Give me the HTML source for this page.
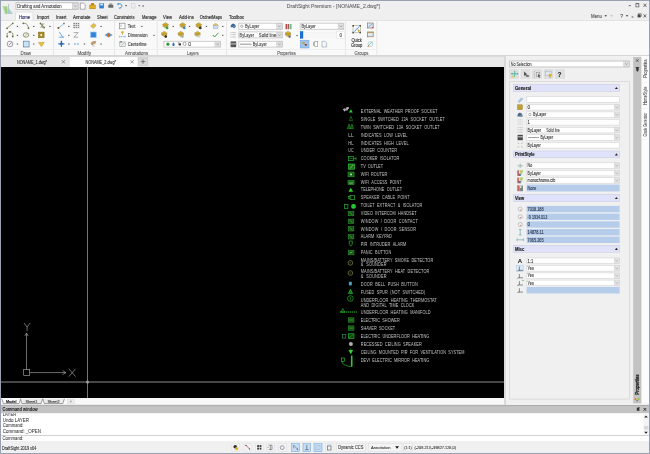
<!DOCTYPE html>
<html><head><meta charset="utf-8">
<style>
*{margin:0;padding:0;box-sizing:border-box}
html,body{width:650px;height:454px;overflow:hidden;background:#f0f0f0;font-family:"Liberation Sans",sans-serif;position:relative}
.a{position:absolute}
.t{position:absolute;white-space:nowrap;line-height:1;color:#333}
svg{position:absolute;left:0;top:0;overflow:visible;will-change:transform}
</style></head><body>
<div class="a" style="left:0px;top:0px;width:650px;height:20px;background:#efefef"></div>
<div class="a" style="left:0px;top:20px;width:650px;height:36px;background:#f9f9f9;border-top:1px solid #e2e2e2;border-bottom:1px solid #d6d6d6"></div>
<div class="a" style="left:0px;top:56px;width:505px;height:11px;background:#e9e9e9;border-top:1px solid #dadada"></div>
<div class="a" style="left:1px;top:67px;width:503px;height:331px;background:#000"></div>
<svg width="650" height="454" style="left:0;top:0">
<line x1="1" y1="382" x2="504" y2="382" stroke="#5e5e5e" stroke-width="1.7"/>
<line x1="87.5" y1="67" x2="87.5" y2="398" stroke="#747474" stroke-width="1"/>
<circle cx="87.5" cy="382" r="1.5" fill="#a0a0a0"/>
<g stroke="#b4b4b4" stroke-width="0.6" fill="none"><line x1="26.5" y1="333" x2="26.5" y2="369.6"/><rect x="23.7" y="369.6" width="6" height="6"/><line x1="29.7" y1="372.6" x2="66" y2="372.6"/><polyline points="62.5,370.6 66,372.6 62.5,374.6"/><polyline points="24.8,336 26.5,333 28.2,336"/><line x1="68.8" y1="368.8" x2="75.6" y2="376.6"/><line x1="75.6" y1="368.8" x2="68.8" y2="376.6"/><polyline points="24,323 27.1,327 30.2,323"/><line x1="27.1" y1="327" x2="27.1" y2="331"/><line x1="26.7" y1="372.6" x2="26.7" y2="372.6"/></g>
<g fill="#c4c4c4" font-family="Liberation Sans" font-size="5.2" transform="scale(0.74,1)">
<text x="487.57" y="112.75" textLength="103.5" lengthAdjust="spacing">EXTERNAL  WEATHER  PROOF  SOCKET</text>
<text x="487.57" y="120.75" textLength="113.5" lengthAdjust="spacing">SINGLE  SWITCHED  13A  SOCKET  OUTLET</text>
<text x="487.57" y="128.85" textLength="106.6" lengthAdjust="spacing">TWIN  SWITCHED  13A  SOCKET  OUTLET</text>
<text x="487.57" y="136.95" textLength="63.0" lengthAdjust="spacing">INDICATES  LOW  LEVEL</text>
<text x="487.57" y="144.85" textLength="64.5" lengthAdjust="spacing">INDICATES  HIGH  LEVEL</text>
<text x="487.57" y="152.15" textLength="48.9" lengthAdjust="spacing">UNDER  COUNTER</text>
<text x="487.57" y="160.05" textLength="52.0" lengthAdjust="spacing">COOKER  ISOLATOR</text>
<text x="487.57" y="168.15" textLength="30.0" lengthAdjust="spacing">TV  OUTLET</text>
<text x="487.57" y="175.75" textLength="35.8" lengthAdjust="spacing">WIFI  ROUTER</text>
<text x="487.57" y="183.85" textLength="55.1" lengthAdjust="spacing">WIFI  ACCESS  POINT</text>
<text x="487.57" y="191.45" textLength="55.7" lengthAdjust="spacing">TELEPHONE  OUTLET</text>
<text x="487.57" y="199.05" textLength="66.1" lengthAdjust="spacing">SPEAKER  CABLE  POINT</text>
<text x="487.57" y="207.25" textLength="83.2" lengthAdjust="spacing">TOILET  EXTRACT  &amp;  ISOLATOR</text>
<text x="487.57" y="214.85" textLength="75.4" lengthAdjust="spacing">VIDEO  INTERCOM  HANDSET</text>
<text x="487.57" y="222.75" textLength="77.0" lengthAdjust="spacing">WINDOW  /  DOOR  CONTACT</text>
<text x="487.57" y="230.55" textLength="74.5" lengthAdjust="spacing">WINDOW  /  DOOR  SENSOR</text>
<text x="487.57" y="238.45" textLength="42.0" lengthAdjust="spacing">ALARM  KEYPAD</text>
<text x="487.57" y="246.05" textLength="61.4" lengthAdjust="spacing">PIR  INTRUDER  ALARM</text>
<text x="487.57" y="253.85" textLength="41.1" lengthAdjust="spacing">PANIC  BUTTON</text>
<text x="487.57" y="261.75" textLength="97.8" lengthAdjust="spacing">MAINS/BATTERY  SMOKE  DETECTOR</text>
<text x="487.57" y="266.45" textLength="34.9" lengthAdjust="spacing">&amp;  SOUNDER</text>
<text x="487.57" y="273.05" textLength="92.6" lengthAdjust="spacing">MAINS/BATTERY  HEAT  DETECTOR</text>
<text x="487.57" y="278.35" textLength="34.9" lengthAdjust="spacing">&amp;  SOUNDER</text>
<text x="487.57" y="286.25" textLength="77.0" lengthAdjust="spacing">DOOR  BELL  PUSH  BUTTON</text>
<text x="487.57" y="294.35" textLength="87.0" lengthAdjust="spacing">FUSED  SPUR  (NOT  SWITCHED)</text>
<text x="487.57" y="301.75" textLength="102.6" lengthAdjust="spacing">UNDERFLOOR  HEATING  THERMOSTAT</text>
<text x="487.57" y="306.85" textLength="72.3" lengthAdjust="spacing">AND  DIGITAL  TIME  CLOCK</text>
<text x="487.57" y="314.45" textLength="94.2" lengthAdjust="spacing">UNDERFLOOR  HEATING  MANIFOLD</text>
<text x="487.57" y="321.85" textLength="52.6" lengthAdjust="spacing">ELECTRIC  SHOWER</text>
<text x="487.57" y="330.25" textLength="46.4" lengthAdjust="spacing">SHAVER  SOCKET</text>
<text x="487.57" y="338.35" textLength="92.6" lengthAdjust="spacing">ELECTRIC  UNDERFLOOR  HEATING</text>
<text x="487.57" y="345.65" textLength="82.3" lengthAdjust="spacing">RECESSED  CEILING  SPEAKER</text>
<text x="487.57" y="354.05" textLength="140.0" lengthAdjust="spacing">CEILING  MOUNTED  PIR  FOR  VENTILATION  SYSTEM</text>
<text x="487.57" y="361.55" textLength="92.6" lengthAdjust="spacing">DEVI  ELECTRIC  MIRROR  HEATING</text>
</g>
<text x="343" y="110.6" font-size="3.8" fill="#eee" stroke="#eee" stroke-width="0.15" font-family="Liberation Sans" textLength="6" lengthAdjust="spacingAndGlyphs" transform="rotate(-18 346 109)">WP</text>
<polygon points="349,112.6 352.8,112.6 350.9,109.2" fill="#2ed02e"/>
<polygon points="349.4,120.6 352.6,120.6 351,116.4" fill="none" stroke="#28b028" stroke-width="0.5"/>
<polygon points="347.4,128.6 350.6,128.6 349,124" fill="#0c3c0c" stroke="#28b028" stroke-width="0.55"/>
<polygon points="350.4,128.6 353.6,128.6 352,124" fill="#0c3c0c" stroke="#28b028" stroke-width="0.55"/>
<text x="348.3" y="137.0" font-size="5" fill="#c4c4c4" textLength="5.2" lengthAdjust="spacingAndGlyphs" font-family="Liberation Sans">LL</text>
<text x="348.3" y="144.60000000000002" font-size="5" fill="#c4c4c4" textLength="5.2" lengthAdjust="spacingAndGlyphs" font-family="Liberation Sans">HL</text>
<text x="348.3" y="152.10000000000002" font-size="5" fill="#c4c4c4" textLength="5.2" lengthAdjust="spacingAndGlyphs" font-family="Liberation Sans">UC</text>
<rect x="348.6" y="156.5" width="5" height="4.2" fill="none" stroke="#2ed02e" stroke-width="0.6"/><line x1="353.6" y1="158.6" x2="356" y2="158.6" stroke="#2ed02e" stroke-width="0.6"/><line x1="356" y1="157" x2="356" y2="160.3" stroke="#2ed02e" stroke-width="0.6"/>
<line x1="349.4" y1="158.6" x2="352.8" y2="158.6" stroke="#2ed02e" stroke-width="0.5"/>
<rect x="348.6" y="164" width="5.8" height="5.2" fill="#1c6e1c" stroke="#2ed02e" stroke-width="0.7"/><line x1="350" y1="168.5" x2="353" y2="165" stroke="#ccc" stroke-width="0.6"/>
<rect x="348" y="172" width="6.1" height="4.8" fill="#166016" stroke="#2aa82a" stroke-width="0.55"/><circle cx="351" cy="174.4" r="0.9" fill="#cfe"/>
<rect x="348" y="180.3" width="6.1" height="4.4" fill="#166016" stroke="#2aa82a" stroke-width="0.55"/><line x1="349" y1="183" x2="353" y2="183" stroke="#cfe" stroke-width="0.6"/>
<polygon points="348.4,191.8 353.2,191.8 350.8,187.8" fill="#2ed02e"/>
<rect x="350" y="195.4" width="4.4" height="4.3" fill="none" stroke="#2ed02e" stroke-width="0.6"/><rect x="348.2" y="196.6" width="1.8" height="1.8" fill="none" stroke="#2ed02e" stroke-width="0.5"/>
<rect x="344.4" y="204.4" width="3.5" height="4.2" fill="none" stroke="#2ed02e" stroke-width="0.6"/><circle cx="353.5" cy="206.4" r="2.4" fill="#2ed02e"/><line x1="351.3" y1="206.4" x2="355.7" y2="206.4" stroke="#0a3" stroke-width="0.5"/>
<rect x="348.2" y="211.4" width="5.6" height="4.4" fill="#124e12" stroke="#2aa82a" stroke-width="0.5"/><line x1="349.5" y1="212.4" x2="352.5" y2="214.8" stroke="#8c8" stroke-width="0.5"/>
<rect x="348.2" y="219.1" width="5.6" height="4.4" fill="#124e12" stroke="#2aa82a" stroke-width="0.5"/><line x1="349.5" y1="220.1" x2="352.5" y2="222.5" stroke="#8c8" stroke-width="0.5"/>
<rect x="348.2" y="226.6" width="5.6" height="4.4" fill="#124e12" stroke="#2aa82a" stroke-width="0.5"/><line x1="349.5" y1="227.6" x2="352.5" y2="230.0" stroke="#8c8" stroke-width="0.5"/>
<rect x="348.2" y="234.6" width="5.6" height="4.4" fill="#124e12" stroke="#2aa82a" stroke-width="0.5"/><line x1="349.5" y1="235.6" x2="352.5" y2="238.0" stroke="#8c8" stroke-width="0.5"/>
<path d="M349.3,241 L352.3,241 L352.3,244 L350.8,246.2 L349.3,244 Z" fill="none" stroke="#2ed02e" stroke-width="0.6"/>
<rect x="348.2" y="250.2" width="5.8" height="4.6" fill="#124e12" stroke="#2aa82a" stroke-width="0.5"/><line x1="349.5" y1="253" x2="352.5" y2="252" stroke="#cec" stroke-width="0.6"/>
<circle cx="350.4" cy="262.9" r="2.3" fill="none" stroke="#9c9c48" stroke-width="0.6"/><line x1="349.5" y1="262.9" x2="351.3" y2="262.9" stroke="#9c9c48" stroke-width="0.5"/>
<circle cx="350.4" cy="273.0" r="2.3" fill="none" stroke="#9c9c48" stroke-width="0.6"/><line x1="349.5" y1="273.0" x2="351.3" y2="273.0" stroke="#9c9c48" stroke-width="0.5"/>
<rect x="348.9" y="281.8" width="2.9" height="3.6" fill="#4fa0c0"/>
<polygon points="348.4,293.6 352.6,293.6 350.5,289.2" fill="#1a6a1a" stroke="#2ed02e" stroke-width="0.6"/>
<circle cx="350.4" cy="298.5" r="2.8" fill="none" stroke="#2ed02e" stroke-width="0.6"/><line x1="350.4" y1="297" x2="350.4" y2="300" stroke="#2ed02e" stroke-width="0.5"/>
<polygon points="341,312.2 344.6,312.2 342.8,308.6" fill="none" stroke="#2ed02e" stroke-width="0.6"/><line x1="340" y1="312" x2="357" y2="312" stroke="#2ed02e" stroke-width="0.9" stroke-dasharray="1.4 0.6"/>
<rect x="348.2" y="317.8" width="5.8" height="4.4" fill="#124e12" stroke="#2aa82a" stroke-width="0.5"/><line x1="349.3" y1="320.0" x2="353" y2="320.0" stroke="#8c8" stroke-width="0.5"/>
<rect x="348.2" y="325.90000000000003" width="5.8" height="4.4" fill="#124e12" stroke="#2aa82a" stroke-width="0.5"/><line x1="349.3" y1="328.1" x2="353" y2="328.1" stroke="#8c8" stroke-width="0.5"/>
<rect x="342.4" y="334.3" width="3.4" height="3.8" fill="none" stroke="#3a9a6a" stroke-width="0.6"/><rect x="348.4" y="333.8" width="5.6" height="4.6" fill="#0f3f0f" stroke="#2ed02e" stroke-width="0.6"/><line x1="349.5" y1="337.5" x2="353" y2="334.8" stroke="#2ed02e" stroke-width="0.5"/>
<circle cx="350.9" cy="344" r="2" fill="#b0b0b0"/>
<polygon points="348.4,350 353.2,350 350.8,354.2" fill="#2ed02e"/><line x1="350.8" y1="348.6" x2="350.8" y2="350" stroke="#2ed02e" stroke-width="0.6"/>
<rect x="350.9" y="355.6" width="1.6" height="11" fill="#3cc03c"/><rect x="341.4" y="358" width="3.2" height="3.6" fill="none" stroke="#2ed02e" stroke-width="0.6"/><path d="M342,361.6 Q342.5,364 344,364.6 T347.5,366 L351.7,366.6" fill="none" stroke="#2ed02e" stroke-width="0.6"/>
</svg>
<div class="a" style="left:0px;top:398px;width:505px;height:7px;background:#f2f2f2"></div>
<div class="a" style="left:504px;top:56px;width:137px;height:349px;background:#f0f0f0;border-left:2px solid #d9d9d9"></div>
<div class="a" style="left:0px;top:405px;width:650px;height:8px;background:#c4c4c4;border-top:1px solid #a9a9a9"></div>
<div class="a" style="left:0px;top:413px;width:650px;height:22px;background:#fff"></div>
<div class="a" style="left:0px;top:435px;width:650px;height:6px;background:#fff;border-top:1px solid #d2d2d2"></div>
<svg width="650" height="454" style="left:0;top:0">
<g opacity="0.8"><polygon points="2.4,6 7.4,6 7.8,14 5,14.2" fill="#a9d88a"/><polygon points="4.4,7 7.2,7 7.6,13.6 5.6,13.6" fill="#7cbf58" opacity="0.75"/><line x1="8.5" y1="4" x2="8.5" y2="14" stroke="#8ab8bc" stroke-width="0.8"/><polygon points="8.6,7.8 13.1,14.1 8.6,14.1" fill="#6aaeae" opacity="0.6"/></g>
<rect x="16.0" y="2.8" width="62.099999999999994" height="6.500000000000001" fill="#fff" stroke="#b4b4b4" stroke-width="0.8"/><rect x="72.6" y="3.3" width="5.5" height="5.500000000000001" fill="#e1e1e1" stroke="#c4c4c4" stroke-width="0.6"/><polyline points="73.94999999999999,5.3500000000000005 75.35,6.750000000000001 76.75,5.3500000000000005" fill="none" stroke="#777" stroke-width="0.6"/>
<text x="17.2" y="7.7" font-size="5.4" fill="#333" font-weight="normal" text-anchor="start" font-family="Liberation Sans" stroke="#333" stroke-width="0.08" textLength="44.5" lengthAdjust="spacingAndGlyphs">Drafting and Annotation</text>
<path d="M80.3,3 h3.2 l1.6,1.6 v4.6 h-4.8 z" fill="#fff" stroke="#777" stroke-width="0.6"/>
<rect x="89.8" y="5" width="5.4" height="3.8" fill="#e0b020" stroke="#9a7a10" stroke-width="0.5"/><rect x="91" y="3" width="3" height="2.2" fill="#c88a10"/>
<rect x="99.3" y="3.2" width="4.6" height="5.2" fill="#2d7fd0"/><rect x="100.3" y="3.6" width="2.6" height="1.8" fill="#dfefff"/>
<rect x="108.3" y="4.8" width="5" height="3" fill="#6a6a6a" rx="0.6"/><rect x="109.3" y="3.4" width="3" height="1.6" fill="#999"/>
<path d="M118.3,4.2 a2.2,2.2 0 1 1 0.5,3.8" fill="none" stroke="#2d7fd0" stroke-width="0.9"/><polygon points="117.3,3.2 119.5,3.6 117.8,5.6" fill="#2d7fd0"/>
<polygon points="125,5.3 127.2,5.3 126.1,6.6" fill="#333"/>
<rect x="131.5" y="3.5" width="3.5" height="4.5" fill="none" stroke="#ccc" stroke-width="0.5"/>
<polygon points="138.2,5.3 140.4,5.3 139.3,6.6" fill="#555"/>
<rect x="142.5" y="5.3" width="1.2" height="1.4" fill="#555"/>
<text x="286.8" y="8.2" font-size="5.9" fill="#555" font-weight="normal" text-anchor="start" font-family="Liberation Sans" stroke="#555" stroke-width="0.05" textLength="93.2" lengthAdjust="spacingAndGlyphs">DraftSight Premium - [NONAME_2.dwg*]</text>
<rect x="628.6" y="5.4" width="2.4" height="0.7" fill="#444"/>
<rect x="635.9" y="3.7" width="3" height="3.2" fill="none" stroke="#444" stroke-width="0.6"/><rect x="635.9" y="3.6" width="3" height="0.6" fill="#444"/>
<path d="M643.5,3.7 l2.9,3.2 M646.4,3.7 l-2.9,3.2" stroke="#333" stroke-width="0.7"/>
<text x="591" y="17.6" font-size="5" fill="#444" font-weight="normal" text-anchor="start" font-family="Liberation Sans" stroke="#444" stroke-width="0.08" textLength="11.0" lengthAdjust="spacingAndGlyphs">Menu</text>
<polygon points="604.4,15.2 607,15.2 605.7,16.8" fill="#333"/>
<polygon points="610.5,15.3 612.7,15.3 611.6,16.8" fill="none" stroke="#aaa" stroke-width="0.4"/>
<text x="620.2" y="17.6" font-size="5.2" fill="#444" font-weight="normal" text-anchor="start" font-family="Liberation Sans" stroke="#444" stroke-width="0.08">?</text>
<polygon points="625.8,15.2 628.4,15.2 627.1,16.8" fill="#333"/>
<rect x="631.6" y="16.6" width="1.8" height="0.8" fill="#333"/>
<rect x="637.6" y="14.4" width="3" height="3" fill="#444"/><rect x="638.4" y="13.8" width="2.8" height="2.4" fill="none" stroke="#444" stroke-width="0.5"/>
<path d="M643.6,14.4 l2.6,3 M646.2,14.4 l-2.6,3" stroke="#333" stroke-width="0.7"/>
<path d="M15.5,20.5 V12 H33 V20.5" fill="#fbfbfb" stroke="#dedede" stroke-width="0.8"/>
<text x="18.9" y="18.5" font-size="4.7" fill="#35356a" font-weight="normal" text-anchor="start" font-family="Liberation Sans" stroke="#35356a" stroke-width="0.16" textLength="11.3" lengthAdjust="spacingAndGlyphs">Home</text>
<text x="37" y="18.5" font-size="4.7" fill="#333" font-weight="normal" text-anchor="start" font-family="Liberation Sans" stroke="#333" stroke-width="0.16" textLength="12.2" lengthAdjust="spacingAndGlyphs">Import</text>
<text x="56" y="18.5" font-size="4.7" fill="#333" font-weight="normal" text-anchor="start" font-family="Liberation Sans" stroke="#333" stroke-width="0.16" textLength="10.5" lengthAdjust="spacingAndGlyphs">Insert</text>
<text x="73" y="18.5" font-size="4.7" fill="#333" font-weight="normal" text-anchor="start" font-family="Liberation Sans" stroke="#333" stroke-width="0.16" textLength="17.5" lengthAdjust="spacingAndGlyphs">Annotate</text>
<text x="97" y="18.5" font-size="4.7" fill="#333" font-weight="normal" text-anchor="start" font-family="Liberation Sans" stroke="#333" stroke-width="0.16" textLength="10.5" lengthAdjust="spacingAndGlyphs">Sheet</text>
<text x="114" y="18.5" font-size="4.7" fill="#333" font-weight="normal" text-anchor="start" font-family="Liberation Sans" stroke="#333" stroke-width="0.16" textLength="20.5" lengthAdjust="spacingAndGlyphs">Constraints</text>
<text x="142" y="18.5" font-size="4.7" fill="#333" font-weight="normal" text-anchor="start" font-family="Liberation Sans" stroke="#333" stroke-width="0.16" textLength="14.6" lengthAdjust="spacingAndGlyphs">Manage</text>
<text x="163" y="18.5" font-size="4.7" fill="#333" font-weight="normal" text-anchor="start" font-family="Liberation Sans" stroke="#333" stroke-width="0.16" textLength="9.0" lengthAdjust="spacingAndGlyphs">View</text>
<text x="179" y="18.5" font-size="4.7" fill="#333" font-weight="normal" text-anchor="start" font-family="Liberation Sans" stroke="#333" stroke-width="0.16" textLength="15.0" lengthAdjust="spacingAndGlyphs">Add-ins</text>
<text x="199.7" y="18.5" font-size="4.7" fill="#333" font-weight="normal" text-anchor="start" font-family="Liberation Sans" stroke="#333" stroke-width="0.16" textLength="22.3" lengthAdjust="spacingAndGlyphs">OrdnetMaps</text>
<text x="229" y="18.5" font-size="4.7" fill="#333" font-weight="normal" text-anchor="start" font-family="Liberation Sans" stroke="#333" stroke-width="0.16" textLength="15.0" lengthAdjust="spacingAndGlyphs">Toolbox</text>
<line x1="53.5" y1="21.5" x2="53.5" y2="55.5" stroke="#e2e2e2" stroke-width="0.8"/>
<line x1="114.5" y1="21.5" x2="114.5" y2="55.5" stroke="#e2e2e2" stroke-width="0.8"/>
<line x1="157.3" y1="21.5" x2="157.3" y2="55.5" stroke="#e2e2e2" stroke-width="0.8"/>
<line x1="226.5" y1="21.5" x2="226.5" y2="55.5" stroke="#e2e2e2" stroke-width="0.8"/>
<line x1="345.5" y1="21.5" x2="345.5" y2="55.5" stroke="#e2e2e2" stroke-width="0.8"/>
<line x1="376.8" y1="21.5" x2="376.8" y2="55.5" stroke="#e2e2e2" stroke-width="0.8"/>
<line x1="1" y1="49.5" x2="376.8" y2="49.5" stroke="#ececec" stroke-width="0.8"/>
<text x="20.5" y="54.8" font-size="4.9" fill="#555" font-weight="normal" text-anchor="start" font-family="Liberation Sans" stroke="#555" stroke-width="0.1" textLength="10.5" lengthAdjust="spacingAndGlyphs">Draw</text>
<text x="77.5" y="54.8" font-size="4.9" fill="#555" font-weight="normal" text-anchor="start" font-family="Liberation Sans" stroke="#555" stroke-width="0.1" textLength="13.5" lengthAdjust="spacingAndGlyphs">Modify</text>
<text x="125" y="54.8" font-size="4.9" fill="#555" font-weight="normal" text-anchor="start" font-family="Liberation Sans" stroke="#555" stroke-width="0.1" textLength="23.2" lengthAdjust="spacingAndGlyphs">Annotations</text>
<text x="187" y="54.8" font-size="4.9" fill="#555" font-weight="normal" text-anchor="start" font-family="Liberation Sans" stroke="#555" stroke-width="0.1" textLength="11.6" lengthAdjust="spacingAndGlyphs">Layers</text>
<text x="277.3" y="54.8" font-size="4.9" fill="#555" font-weight="normal" text-anchor="start" font-family="Liberation Sans" stroke="#555" stroke-width="0.1" textLength="18.5" lengthAdjust="spacingAndGlyphs">Properties</text>
<text x="354.5" y="54.8" font-size="4.9" fill="#555" font-weight="normal" text-anchor="start" font-family="Liberation Sans" stroke="#555" stroke-width="0.1" textLength="14.0" lengthAdjust="spacingAndGlyphs">Groups</text>
<g stroke="#6f7440" stroke-width="0.7" fill="none"><line x1="7" y1="28.3" x2="12.8" y2="23.3"/><path d="M23.3,23.3 q3,-0.5 4,1.5 q1,2 1.2,3.6"/><path d="M40.5,23.5 l3.5,4 M44,23.5 l-3.5,4 M42.2,23.2 v5"/><path d="M7.2,35.8 a3,3 0 1 1 5.6,0"/><ellipse cx="26" cy="35" rx="2.8" ry="2.2"/><circle cx="10" cy="44" r="2.8" stroke="#777"/></g>
<circle cx="7" cy="28.3" r="0.9" fill="#6a7040"/>
<circle cx="12.8" cy="23.3" r="0.9" fill="#6a7040"/>
<circle cx="23.3" cy="23.3" r="0.9" fill="#6a7040"/>
<circle cx="28.5" cy="28.2" r="0.9" fill="#6a7040"/>
<circle cx="40.5" cy="23.5" r="0.9" fill="#6a7040"/>
<circle cx="44" cy="27.5" r="0.9" fill="#6a7040"/>
<circle cx="7.2" cy="36.5" r="0.9" fill="#6a7040"/>
<circle cx="12.8" cy="36.5" r="0.9" fill="#6a7040"/>
<circle cx="10" cy="32" r="0.9" fill="#6a7040"/>
<path d="M24,36.5 l4,-3" stroke="#888" stroke-width="0.6"/>
<line x1="9" y1="45" x2="11.5" y2="42.5" stroke="#555" stroke-width="0.7"/>
<rect x="38.4" y="32.1" width="5.7" height="5.7" fill="#a88c28" stroke="#806a18" stroke-width="0.5"/><circle cx="41.2" cy="35" r="0.9" fill="#fff"/>
<rect x="23.3" y="41.2" width="5.8" height="5.8" fill="#c8e4f8" stroke="#6a8090" stroke-width="0.7"/>
<polygon points="38.6,42.4 44.2,42.4 41.4,46.6" fill="#f0c030" stroke="#b08a10" stroke-width="0.5"/>
<rect x="16.799999999999997" y="25.9" width="1.3" height="1.1" fill="#555"/>
<rect x="33.1" y="25.9" width="1.3" height="1.1" fill="#555"/>
<rect x="49.3" y="25.9" width="1.3" height="1.1" fill="#555"/>
<rect x="16.799999999999997" y="34.8" width="1.3" height="1.1" fill="#555"/>
<rect x="33.1" y="34.8" width="1.3" height="1.1" fill="#555"/>
<rect x="16.799999999999997" y="43.5" width="1.3" height="1.1" fill="#555"/>
<rect x="33.1" y="43.5" width="1.3" height="1.1" fill="#555"/>
<line x1="58.5" y1="28" x2="64" y2="23.5" stroke="#3a8ad0" stroke-width="0.8" stroke-dasharray="1.2 0.6"/><rect x="57.5" y="27" width="1.8" height="1.8" fill="#7a5a20"/><rect x="63.3" y="22.8" width="1.4" height="1.4" fill="#666"/>
<g fill="#8a8a8a"><rect x="73.3" y="22.8" width="1.6" height="1.4"/><rect x="73.3" y="24.8" width="1.6" height="1.4"/><rect x="73.3" y="26.8" width="1.6" height="1.4"/><rect x="75.5" y="22.8" width="1.6" height="1.4"/><rect x="75.5" y="24.8" width="1.6" height="1.4"/><rect x="75.5" y="26.8" width="1.6" height="1.4"/><rect x="77.7" y="22.8" width="1.6" height="1.4"/><rect x="77.7" y="24.8" width="1.6" height="1.4"/><rect x="77.7" y="26.8" width="1.6" height="1.4"/></g>
<polygon points="90.6,26.2 93.6,23.4 96.2,25.4 93.2,28.2" fill="#e8c040" stroke="#9a7a20" stroke-width="0.4"/>
<path d="M58.8,32.4 q2,0.4 2.4,2.4 q0.4,2 2.4,2.4 M58.8,37.2 h4.8" fill="none" stroke="#3a8ad0" stroke-width="0.7"/>
<path d="M73.6,32.6 h4.6 l-4.4,4.6 h4.4" fill="none" stroke="#888" stroke-width="0.7"/>
<rect x="90.6" y="32" width="5.6" height="5.6" fill="#2f86d8" stroke="#9ac8f0" stroke-width="0.7"/>
<polygon points="104.6,35 108.6,32.6 112.6,35 108.6,37.4" fill="#5a9ad0"/><circle cx="108.6" cy="35" r="1.7" fill="#d86a20"/>
<path d="M61.4,40.8 v6 M58.4,43.8 h6" stroke="#2a6ab0" stroke-width="1.3"/><circle cx="61.4" cy="43.8" r="1.4" fill="#2a6ab0"/>
<path d="M74,44 h1.8 M77,44 h1.8" stroke="#3a8ad0" stroke-width="0.9"/>
<path d="M91,43 q2,-2.4 5,-1.4 l-1,2.2 q-2,-0.4 -3,1.4 z" fill="#c8a070" stroke="#8a6a40" stroke-width="0.4"/><line x1="92.6" y1="44.6" x2="93.8" y2="46.6" stroke="#777" stroke-width="0.6"/>
<rect x="68.2" y="25.9" width="1.3" height="1.1" fill="#555"/>
<rect x="100.4" y="25.9" width="1.3" height="1.1" fill="#555"/>
<rect x="68.2" y="34.8" width="1.3" height="1.1" fill="#555"/>
<rect x="68.2" y="43.5" width="1.3" height="1.1" fill="#555"/>
<rect x="83.80000000000001" y="43.5" width="1.3" height="1.1" fill="#555"/>
<rect x="100.4" y="43.5" width="1.3" height="1.1" fill="#555"/>
<rect x="119.6" y="23.2" width="5.4" height="5.6" fill="#fff" stroke="#777" stroke-width="0.6"/><line x1="121" y1="24.6" x2="121" y2="26.8" stroke="#555" stroke-width="0.5"/>
<text x="127.8" y="28.1" font-size="5.2" fill="#333" font-weight="normal" text-anchor="start" font-family="Liberation Sans" stroke="#333" stroke-width="0.08" textLength="7.5" lengthAdjust="spacingAndGlyphs">Text</text>
<ellipse cx="122.4" cy="32.2" rx="1.2" ry="1.3" fill="#e0b030"/><rect x="122" y="33.2" width="0.8" height="1.4" fill="#b08a20"/><line x1="119.4" y1="36.6" x2="125.4" y2="36.6" stroke="#3a8ad0" stroke-width="0.7" stroke-dasharray="1 0.6"/><path d="M119.6,35.6 v2 M125.2,35.6 v2" stroke="#5a9ad0" stroke-width="0.4"/>
<text x="127.8" y="36.8" font-size="5.2" fill="#333" font-weight="normal" text-anchor="start" font-family="Liberation Sans" stroke="#333" stroke-width="0.08" textLength="19.9" lengthAdjust="spacingAndGlyphs">Dimension</text>
<rect x="119.8" y="42" width="5.4" height="4.6" fill="#eef2f4" stroke="#8a8a8a" stroke-width="0.5"/><rect x="119.6" y="41.4" width="2.4" height="1" fill="#666"/><path d="M120.8,45.6 l3.4,-2.4" stroke="#7a9a6a" stroke-width="0.5"/>
<text x="127.8" y="45.8" font-size="5.2" fill="#333" font-weight="normal" text-anchor="start" font-family="Liberation Sans" stroke="#333" stroke-width="0.08" textLength="18.8" lengthAdjust="spacingAndGlyphs">Centerline</text>
<rect x="141.20000000000002" y="25.9" width="1.3" height="1.1" fill="#555"/>
<rect x="153.4" y="34.8" width="1.3" height="1.1" fill="#555"/>
<polygon points="162.5,24.5 165.5,22.7 168.5,24.5 165.5,26.3" fill="#e8c030" stroke="#8a7020" stroke-width="0.5"/><polygon points="162.5,26.1 165.5,27.9 168.5,26.1 165.5,24.3" fill="#c8a020" stroke="#8a7020" stroke-width="0.5" opacity="0.85"/><circle cx="167.1" cy="27.9" r="1.3" fill="#3aa040"/>
<polygon points="179.7,24.5 182.7,22.7 185.7,24.5 182.7,26.3" fill="#e8c030" stroke="#8a7020" stroke-width="0.5"/><polygon points="179.7,26.1 182.7,27.9 185.7,26.1 182.7,24.3" fill="#c8a020" stroke="#8a7020" stroke-width="0.5" opacity="0.85"/><circle cx="184.29999999999998" cy="27.9" r="1.3" fill="#3a8ad0"/>
<polygon points="195.7,24.5 198.7,22.7 201.7,24.5 198.7,26.3" fill="#e8c030" stroke="#8a7020" stroke-width="0.5"/><polygon points="195.7,26.1 198.7,27.9 201.7,26.1 198.7,24.3" fill="#c8a020" stroke="#8a7020" stroke-width="0.5" opacity="0.85"/><circle cx="200.29999999999998" cy="27.9" r="1.3" fill="#333"/>
<polygon points="212.8,24.6 215.6,23 218.4,24.6 215.6,26.2" fill="#e0c060"/><rect x="213.2" y="25.6" width="4.8" height="2.8" fill="#cfe0f0" stroke="#889" stroke-width="0.4"/>
<polygon points="161.2,33.2 164.2,31.400000000000002 167.2,33.2 164.2,35.0" fill="#e8c030" stroke="#8a7020" stroke-width="0.5"/><polygon points="161.2,34.800000000000004 164.2,36.6 167.2,34.800000000000004 164.2,33.0" fill="#c8a020" stroke="#8a7020" stroke-width="0.5" opacity="0.85"/><circle cx="165.79999999999998" cy="36.6" r="1.3" fill="#333"/>
<polygon points="177.8,33.2 180.8,31.400000000000002 183.8,33.2 180.8,35.0" fill="#e8c030" stroke="#8a7020" stroke-width="0.5"/><polygon points="177.8,34.800000000000004 180.8,36.6 183.8,34.800000000000004 180.8,33.0" fill="#c8a020" stroke="#8a7020" stroke-width="0.5" opacity="0.85"/><circle cx="182.4" cy="36.6" r="1.3" fill="#9ab"/>
<polygon points="194.5,33.2 197.5,31.400000000000002 200.5,33.2 197.5,35.0" fill="#e8c030" stroke="#8a7020" stroke-width="0.5"/><polygon points="194.5,34.800000000000004 197.5,36.6 200.5,34.800000000000004 197.5,33.0" fill="#c8a020" stroke="#8a7020" stroke-width="0.5" opacity="0.85"/><circle cx="199.1" cy="36.6" r="1.3" fill="#cde"/>
<polyline points="212.8,35 214.6,37 218.4,32.8" fill="none" stroke="#3aa040" stroke-width="1"/>
<rect x="172.6" y="25.9" width="1.3" height="1.1" fill="#555"/>
<rect x="188.9" y="25.9" width="1.3" height="1.1" fill="#555"/>
<rect x="205.8" y="25.9" width="1.3" height="1.1" fill="#555"/>
<rect x="222.1" y="25.9" width="1.3" height="1.1" fill="#555"/>
<rect x="222.1" y="34.8" width="1.3" height="1.1" fill="#555"/>
<rect x="163.9" y="41.3" width="56.5" height="5.800000000000004" fill="#fff" stroke="#c4c4c4" stroke-width="0.8"/><rect x="214.9" y="41.8" width="5.5" height="4.800000000000004" fill="#e1e1e1" stroke="#c4c4c4" stroke-width="0.6"/><polyline points="216.25,43.5 217.65,44.900000000000006 219.05,43.5" fill="none" stroke="#777" stroke-width="0.6"/>
<circle cx="167.9" cy="44.2" r="1.6" fill="#3a9a3a"/><path d="M173.5,42.2 q1.4,1.6 1.2,2.6 a1.2,1.2 0 1 1 -2.4,0 q-0.2,-1 1.2,-2.6z" fill="#2a70c0"/><rect x="178.6" y="43.4" width="2.4" height="2" fill="#333"/><path d="M178.4,43.6 v-1 h1" fill="none" stroke="#333" stroke-width="0.4"/><circle cx="184.6" cy="43.8" r="1.6" fill="none" stroke="#555" stroke-width="0.5"/>
<text x="188.2" y="46.2" font-size="4.8" fill="#333" font-weight="normal" text-anchor="start" font-family="Liberation Sans" stroke="#333" stroke-width="0.08">0</text>
<path d="M230.6,27.2 q0,-3.4 2.6,-3.8 q2.6,0.4 2.6,3.8 z" fill="#3a6a9a"/><circle cx="234" cy="27" r="1.2" fill="#6a8ab0"/>
<path d="M230.6,32.6 h5.4 M230.6,34.6 h5.4 M230.6,37 h5.4" stroke="#777" stroke-width="0.5" stroke-dasharray="0.8 0.4"/>
<rect x="230.6" y="41.4" width="5.6" height="5.8" fill="#555"/><rect x="230.6" y="43.4" width="5.6" height="1" fill="#ccc"/>
<rect x="238.8" y="23.2" width="43.5" height="6.100000000000001" fill="#fff" stroke="#c4c4c4" stroke-width="0.8"/><rect x="276.8" y="23.7" width="5.5" height="5.100000000000001" fill="#e1e1e1" stroke="#c4c4c4" stroke-width="0.6"/><polyline points="278.15000000000003,25.55 279.55,26.95 280.95,25.55" fill="none" stroke="#777" stroke-width="0.6"/>
<circle cx="241.8" cy="26.2" r="1.2" fill="none" stroke="#666" stroke-width="0.5"/>
<text x="245" y="28.1" font-size="5.2" fill="#333" font-weight="normal" text-anchor="start" font-family="Liberation Sans" stroke="#333" stroke-width="0.08" textLength="14.3" lengthAdjust="spacingAndGlyphs">ByLayer</text>
<rect x="238.8" y="31.9" width="43.5" height="6.0" fill="#fff" stroke="#c4c4c4" stroke-width="0.8"/><rect x="276.8" y="32.4" width="5.5" height="5.0" fill="#e1e1e1" stroke="#c4c4c4" stroke-width="0.6"/><polyline points="278.15000000000003,34.199999999999996 279.55,35.6 280.95,34.199999999999996" fill="none" stroke="#777" stroke-width="0.6"/>
<text x="239.6" y="36.8" font-size="5.2" fill="#333" font-weight="normal" text-anchor="start" font-family="Liberation Sans" stroke="#333" stroke-width="0.08" textLength="14.4" lengthAdjust="spacingAndGlyphs">ByLayer</text>
<text x="258.8" y="36.8" font-size="5.2" fill="#333" font-weight="normal" text-anchor="start" font-family="Liberation Sans" stroke="#333" stroke-width="0.08" textLength="17.5" lengthAdjust="spacingAndGlyphs">Solid line</text>
<rect x="238.8" y="41.3" width="43.5" height="5.800000000000004" fill="#fff" stroke="#c4c4c4" stroke-width="0.8"/><rect x="276.8" y="41.8" width="5.5" height="4.800000000000004" fill="#e1e1e1" stroke="#c4c4c4" stroke-width="0.6"/><polyline points="278.15000000000003,43.5 279.55,44.900000000000006 280.95,43.5" fill="none" stroke="#777" stroke-width="0.6"/>
<line x1="240" y1="44.2" x2="251.6" y2="44.2" stroke="#444" stroke-width="0.6"/>
<text x="252.8" y="46.3" font-size="5.2" fill="#333" font-weight="normal" text-anchor="start" font-family="Liberation Sans" stroke="#333" stroke-width="0.08" textLength="14.0" lengthAdjust="spacingAndGlyphs">ByLayer</text>
<rect x="285.6" y="24" width="1.3" height="5.2" fill="#b83030"/><rect x="287.6" y="24" width="1.3" height="5.2" fill="#8a5040"/><rect x="289.6" y="24" width="1.3" height="5.2" fill="#60b070"/><rect x="290.9" y="24" width="1" height="5.2" fill="#90d0e0"/>
<polygon points="285,33.2 288,31.400000000000002 291,33.2 288,35.0" fill="#e8c030" stroke="#8a7020" stroke-width="0.5"/><polygon points="285,34.800000000000004 288,36.6 291,34.800000000000004 288,33.0" fill="#c8a020" stroke="#8a7020" stroke-width="0.5" opacity="0.85"/><circle cx="289.6" cy="36.6" r="1.3" fill="#777"/>
<rect x="296.4" y="35.0" width="1.3" height="1.1" fill="#555"/>
<rect x="300.2" y="23.2" width="43.5" height="6.100000000000001" fill="#fff" stroke="#c4c4c4" stroke-width="0.8"/><rect x="338.2" y="23.7" width="5.5" height="5.100000000000001" fill="#e1e1e1" stroke="#c4c4c4" stroke-width="0.6"/><polyline points="339.55,25.55 340.95,26.95 342.34999999999997,25.55" fill="none" stroke="#777" stroke-width="0.6"/>
<text x="301.4" y="28.1" font-size="5.2" fill="#333" font-weight="normal" text-anchor="start" font-family="Liberation Sans" stroke="#333" stroke-width="0.08" textLength="14.2" lengthAdjust="spacingAndGlyphs">ByLayer</text>
<rect x="300.5" y="32.6" width="35.6" height="4.6" fill="#f7f7f7" stroke="#ececec" stroke-width="0.4"/>
<rect x="300" y="31.2" width="3.2" height="7.4" fill="#1a70d0"/>
<rect x="336.8" y="31.4" width="7.4" height="6.8" fill="#fff" stroke="#ddd" stroke-width="0.5"/>
<text x="339.6" y="36.6" font-size="4.6" fill="#444" font-weight="normal" text-anchor="start" font-family="Liberation Sans" stroke="#444" stroke-width="0.08">0</text>
<rect x="300.2" y="40.2" width="8.8" height="7.8" fill="#9cc4ec" stroke="#6aa0d8" stroke-width="0.5"/><rect x="302.4" y="42" width="2.2" height="2" fill="#c8a030"/><rect x="304.8" y="44" width="2" height="1.6" fill="#a03030"/>
<rect x="313" y="42" width="1.2" height="3.8" fill="#e0b020"/><rect x="314.8" y="41.6" width="3" height="4.8" fill="#fff" stroke="#777" stroke-width="0.5"/>
<path d="M322,41.4 h3.2 l1.4,1.4 v4.2 h-4.6z" fill="#f4f8fc" stroke="#7a8a9a" stroke-width="0.5"/>
<rect x="353" y="25.6" width="7.4" height="7.2" fill="#f4f8fc" stroke="#9a9a8a" stroke-width="0.5"/><rect x="352.4" y="25" width="1.6" height="1.6" fill="#5a5030"/><rect x="359.4" y="25" width="1.6" height="1.6" fill="#5a5030"/><rect x="352.4" y="31.8" width="1.6" height="1.6" fill="#5a5030"/><rect x="359.4" y="31.8" width="1.6" height="1.6" fill="#5a5030"/><path d="M354.4,31.4 l4.4,-4.4" stroke="#3a8ad0" stroke-width="0.9"/><polygon points="357.6,29 360.2,30.4 358.2,32.6" fill="#d8b040"/>
<text x="351.4" y="42.2" font-size="5" fill="#333" font-weight="normal" text-anchor="start" font-family="Liberation Sans" stroke="#333" stroke-width="0.14" textLength="10.5" lengthAdjust="spacingAndGlyphs">Quick</text>
<text x="350.9" y="47.4" font-size="5" fill="#333" font-weight="normal" text-anchor="start" font-family="Liberation Sans" stroke="#333" stroke-width="0.14" textLength="11.3" lengthAdjust="spacingAndGlyphs">Group</text>
<rect x="367.6" y="23" width="5.6" height="5" fill="#dfe8f0" stroke="#7a6a4a" stroke-width="0.6"/><path d="M368.5,27 l4,-3.2" stroke="#3a8ad0" stroke-width="0.6"/><circle cx="372.6" cy="27.6" r="0.8" fill="#d05050"/>
<rect x="367.6" y="32.2" width="5.6" height="4.6" fill="#dfe8f0" stroke="#7a6a4a" stroke-width="0.6"/><rect x="367.2" y="31.6" width="6.4" height="1.4" fill="#b89a60"/>
<circle cx="370.4" cy="44" r="2.4" fill="none" stroke="#8ac0e0" stroke-width="0.6"/><path d="M368,46 l4.6,-4.4" stroke="#6ab040" stroke-width="0.6"/><circle cx="368.2" cy="46.2" r="0.8" fill="#e08040"/>
</svg>
<svg width="650" height="454" style="left:0;top:0">
<rect x="1" y="57" width="68" height="10" fill="#e6e6e6"/>
<text x="17" y="63.6" font-size="5" fill="#333" font-weight="normal" text-anchor="start" font-family="Liberation Sans" stroke="#333" stroke-width="0.08" textLength="30.0" lengthAdjust="spacingAndGlyphs">NONAME_1.dwg*</text>
<path d="M61.8,60.2 l3.2,3.2 M65,60.2 l-3.2,3.2" stroke="#555" stroke-width="0.6"/>
<rect x="70" y="57" width="67.5" height="10" fill="#fdfdfd"/>
<text x="85.4" y="63.6" font-size="5" fill="#333" font-weight="normal" text-anchor="start" font-family="Liberation Sans" stroke="#333" stroke-width="0.08" textLength="30.6" lengthAdjust="spacingAndGlyphs">NONAME_2.dwg*</text>
<path d="M130.6,60.2 l3.2,3.2 M133.8,60.2 l-3.2,3.2" stroke="#555" stroke-width="0.6"/>
<rect x="138.2" y="57.8" width="9.6" height="7.6" fill="#d8d8d8" stroke="#bdbdbd" stroke-width="0.5"/>
<path d="M143,59.4 v4.4 M140.8,61.6 h4.4" stroke="#555" stroke-width="0.7"/>
<rect x="1" y="398.3" width="503" height="6.6" fill="#f8f8f8"/>
<line x1="1" y1="405" x2="504" y2="405" stroke="#d0d0d0" stroke-width="0.6"/>
<path d="M20.3,398.8 L21.900000000000002,403.6 L41.0,403.6 L42.6,398.8" fill="#ececec" stroke="#555" stroke-width="0.55"/><text x="25.450000000000003" y="402.6" font-size="4.4" fill="#333" font-weight="normal" text-anchor="start" font-family="Liberation Sans" stroke="#333" stroke-width="0.1" textLength="12.0" lengthAdjust="spacingAndGlyphs">Sheet1</text>
<path d="M42.8,398.8 L44.4,403.6 L62.800000000000004,403.6 L64.4,398.8" fill="#ececec" stroke="#555" stroke-width="0.55"/><text x="47.6" y="402.6" font-size="4.4" fill="#333" font-weight="normal" text-anchor="start" font-family="Liberation Sans" stroke="#333" stroke-width="0.1" textLength="12.0" lengthAdjust="spacingAndGlyphs">Sheet2</text>
<path d="M1.8,398.8 L3.4000000000000004,403.6 L19.0,403.6 L20.6,398.8" fill="#ffffff" stroke="#555" stroke-width="0.55"/><text x="5.9" y="402.6" font-size="4.4" fill="#111" font-weight="bold" text-anchor="start" font-family="Liberation Sans" stroke="#111" stroke-width="0.1" textLength="10.6" lengthAdjust="spacingAndGlyphs">Model</text>
<rect x="67.2" y="399.2" width="7.2" height="4.6" fill="#ececec" stroke="#d4d4d4" stroke-width="0.4"/><path d="M70.8,400.2 v2.6 M69.5,401.5 h2.6" stroke="#999" stroke-width="0.5"/>
<rect x="509.7" y="61.0" width="119.59999999999997" height="6.0" fill="#fff" stroke="#b8b8b8" stroke-width="0.8"/><rect x="623.8" y="61.5" width="5.5" height="5.0" fill="#e1e1e1" stroke="#c4c4c4" stroke-width="0.6"/><polyline points="625.15,63.3 626.55,64.7 627.9499999999999,63.3" fill="none" stroke="#777" stroke-width="0.6"/>
<text x="510.8" y="65.6" font-size="4.6" fill="#333" font-weight="normal" text-anchor="start" font-family="Liberation Sans" stroke="#333" stroke-width="0.08" textLength="20.8" lengthAdjust="spacingAndGlyphs">No Selection</text>
<rect x="509.5" y="69.8" width="9" height="8.6" fill="#e0e0e0" stroke="#d4d4d4" stroke-width="0.5"/>
<rect x="521" y="69.8" width="9" height="8.6" fill="#e0e0e0" stroke="#d4d4d4" stroke-width="0.5"/>
<rect x="532.5" y="69.8" width="9" height="8.6" fill="#e0e0e0" stroke="#d4d4d4" stroke-width="0.5"/>
<rect x="544" y="69.8" width="9" height="8.6" fill="#e0e0e0" stroke="#d4d4d4" stroke-width="0.5"/>
<rect x="555.5" y="69.8" width="9" height="8.6" fill="#e0e0e0" stroke="#d4d4d4" stroke-width="0.5"/>
<path d="M511.4,73.8 h6.6 M514.7,70.8 v6.2" stroke="#4ab0a0" stroke-width="0.9"/><polygon points="511,73.8 512.4,72.6 512.4,75" fill="#4ab0a0"/><polygon points="518.4,73.8 517,72.6 517,75" fill="#4ab0a0"/><circle cx="512.6" cy="76.6" r="1.2" fill="#d8c860"/>
<path d="M524,71.6 l0,4.4 l1.2,-1 l1.2,2 l0.8,-0.4 l-1.2,-2 l1.6,-0.2 z" fill="#555"/><rect x="526.4" y="75" width="2.4" height="2" fill="#777"/>
<path d="M534.4,71.2 v6.4" stroke="#7a8a9a" stroke-width="0.5" stroke-dasharray="0.8 0.6"/><rect x="536.4" y="72.4" width="3.4" height="4" fill="none" stroke="#888" stroke-width="0.5"/><path d="M538,74 l0,3.4 l0.9,-0.8 l0.9,1.4 l0.6,-0.3 l-0.9,-1.4 l1.2,-0.2 z" fill="#555"/>
<rect x="545.6" y="71.2" width="5.6" height="4.6" fill="#dce8f6" stroke="#9ab0c8" stroke-width="0.5"/><circle cx="550" cy="75.2" r="1.4" fill="#e0b020"/><rect x="549.6" y="76.4" width="0.8" height="1.4" fill="#8a7020"/>
<text x="557.6" y="76.8" font-size="6.4" fill="#222" font-weight="bold" text-anchor="start" font-family="Liberation Sans" stroke="#222" stroke-width="0.08" textLength="4.0" lengthAdjust="spacingAndGlyphs">?</text>
<rect x="509.5" y="81.5" width="120" height="317.6" fill="#f0f0f0" stroke="#d8d8d8" stroke-width="0.8"/>
<rect x="513.4" y="84.4" width="106.2" height="7.0" fill="#dfe2f8" stroke="#c6cae0" stroke-width="0.5"/><text x="515" y="89.7" font-size="5" fill="#1a1a1a" font-weight="bold" text-anchor="start" font-family="Liberation Sans" stroke="#1a1a1a" stroke-width="0.15" textLength="16.0" lengthAdjust="spacingAndGlyphs">General</text><polygon points="614.9,89.0 617.9,89.0 616.4,86.9" fill="#222"/>
<rect x="526.8" y="96.7" width="92.6" height="5.6000000000000005" fill="#fff" stroke="#d4d4d4" stroke-width="0.6"/>
<rect x="526.8" y="104.5" width="92.6" height="5.6000000000000005" fill="#fff" stroke="#d4d4d4" stroke-width="0.6"/><rect x="614.2" y="104.8" width="5.2" height="5.0" fill="#e4e4e4" stroke="#cdcdcd" stroke-width="0.4"/><polyline points="615.5,106.7 616.8,107.89999999999999 618.0999999999999,106.7" fill="none" stroke="#888" stroke-width="0.5"/><text x="527.6" y="109.0" font-size="5" fill="#333" font-weight="normal" text-anchor="start" font-family="Liberation Sans" stroke="#333" stroke-width="0.12" textLength="2.6" lengthAdjust="spacingAndGlyphs">0</text>
<rect x="526.8" y="111.89999999999999" width="92.6" height="5.6000000000000005" fill="#fff" stroke="#d4d4d4" stroke-width="0.6"/><rect x="614.2" y="112.19999999999999" width="5.2" height="5.0" fill="#e4e4e4" stroke="#cdcdcd" stroke-width="0.4"/><polyline points="615.5,114.1 616.8,115.29999999999998 618.0999999999999,114.1" fill="none" stroke="#888" stroke-width="0.5"/><text x="533" y="116.39999999999999" font-size="5" fill="#333" font-weight="normal" text-anchor="start" font-family="Liberation Sans" stroke="#333" stroke-width="0.12" textLength="13.2" lengthAdjust="spacingAndGlyphs">ByLayer</text>
<circle cx="529.9" cy="114.6" r="1.25" fill="none" stroke="#555" stroke-width="0.45"/>
<rect x="526.8" y="119.5" width="92.6" height="5.6000000000000005" fill="#fff" stroke="#d4d4d4" stroke-width="0.6"/><text x="527.6" y="124.0" font-size="5" fill="#333" font-weight="normal" text-anchor="start" font-family="Liberation Sans" stroke="#333" stroke-width="0.12" textLength="2.2" lengthAdjust="spacingAndGlyphs">1</text>
<rect x="526.8" y="127.3" width="92.6" height="5.6000000000000005" fill="#fff" stroke="#d4d4d4" stroke-width="0.6"/><rect x="614.2" y="127.6" width="5.2" height="5.0" fill="#e4e4e4" stroke="#cdcdcd" stroke-width="0.4"/><polyline points="615.5,129.5 616.8,130.7 618.0999999999999,129.5" fill="none" stroke="#888" stroke-width="0.5"/><text x="527.6" y="131.79999999999998" font-size="5" fill="#333" font-weight="normal" text-anchor="start" font-family="Liberation Sans" stroke="#333" stroke-width="0.12" textLength="13.4" lengthAdjust="spacingAndGlyphs">ByLayer</text>
<text x="546.2" y="131.7" font-size="4.8" fill="#333" font-weight="normal" text-anchor="start" font-family="Liberation Sans" stroke="#333" stroke-width="0.06" textLength="13.8" lengthAdjust="spacingAndGlyphs">Solid line</text>
<rect x="526.8" y="134.70000000000002" width="92.6" height="5.6000000000000005" fill="#fff" stroke="#d4d4d4" stroke-width="0.6"/><rect x="614.2" y="135.0" width="5.2" height="5.0" fill="#e4e4e4" stroke="#cdcdcd" stroke-width="0.4"/><polyline points="615.5,136.9 616.8,138.1 618.0999999999999,136.9" fill="none" stroke="#888" stroke-width="0.5"/><text x="540.5" y="139.2" font-size="5" fill="#333" font-weight="normal" text-anchor="start" font-family="Liberation Sans" stroke="#333" stroke-width="0.12" textLength="12.6" lengthAdjust="spacingAndGlyphs">ByLayer</text>
<line x1="528" y1="137.5" x2="539" y2="137.5" stroke="#444" stroke-width="0.5"/>
<rect x="526.8" y="142.5" width="92.6" height="5.6000000000000005" fill="#fff" stroke="#d4d4d4" stroke-width="0.6"/><text x="527.6" y="146.99999999999997" font-size="5" fill="#333" font-weight="normal" text-anchor="start" font-family="Liberation Sans" stroke="#333" stroke-width="0.12" textLength="13.2" lengthAdjust="spacingAndGlyphs">ByLayer</text>
<path d="M518,101.4 l3.6,-3.6 l1.2,1.2 l-3.6,3.6 z" fill="#a8c8e8" stroke="#6a9ac8" stroke-width="0.4"/>
<rect x="517.6" y="104.8" width="4.8" height="4.8" fill="#c0a030" stroke="#8a7020" stroke-width="0.4"/>
<path d="M517.4,116.6 q0,-3.6 2.4,-3.8 q2.6,0.2 2.6,3.8 z" fill="#4a6a8a"/><circle cx="521.4" cy="115.8" r="1.2" fill="#7a8aa0"/>
<path d="M517.6,119.8 h5.4 M517.6,122.0 h5.4 M517.6,124.2 h5.4" stroke="#aaa" stroke-width="0.5" stroke-dasharray="0.8 0.5"/>
<path d="M517.6,127.6 h5.4 M517.6,129.8 h5.4 M517.6,132 h5.4" stroke="#999" stroke-width="0.5" stroke-dasharray="0.8 0.4"/>
<rect x="517.6" y="134.8" width="5.2" height="5.4" fill="#4a4a4a"/><rect x="517.6" y="136.4" width="5.2" height="0.9" fill="#ddd"/>
<path d="M517.8,142.6 l1.2,1.2 M522.6,142.6 l-1.2,1.2 M517.8,147.6 l1.2,-1.2 M522.6,147.6 l-1.2,-1.2" stroke="#777" stroke-width="0.6"/>
<rect x="513.4" y="151" width="106.2" height="6.599999999999994" fill="#dfe2f8" stroke="#c6cae0" stroke-width="0.5"/><text x="515" y="155.9" font-size="5" fill="#1a1a1a" font-weight="bold" text-anchor="start" font-family="Liberation Sans" stroke="#1a1a1a" stroke-width="0.15" textLength="19.5" lengthAdjust="spacingAndGlyphs">PrintStyle</text><polygon points="614.9,155.4 617.9,155.4 616.4,153.3" fill="#222"/>
<rect x="526.8" y="162.8" width="92.6" height="5.6000000000000005" fill="#fff" stroke="#d4d4d4" stroke-width="0.6"/><rect x="614.2" y="163.1" width="5.2" height="5.0" fill="#e4e4e4" stroke="#cdcdcd" stroke-width="0.4"/><polyline points="615.5,165.0 616.8,166.2 618.0999999999999,165.0" fill="none" stroke="#888" stroke-width="0.5"/><text x="527.6" y="167.29999999999998" font-size="5" fill="#333" font-weight="normal" text-anchor="start" font-family="Liberation Sans" stroke="#333" stroke-width="0.12" textLength="4.6" lengthAdjust="spacingAndGlyphs">No</text>
<rect x="526.8" y="170.3" width="92.6" height="5.6000000000000005" fill="#fff" stroke="#d4d4d4" stroke-width="0.6"/><rect x="614.2" y="170.6" width="5.2" height="5.0" fill="#e4e4e4" stroke="#cdcdcd" stroke-width="0.4"/><polyline points="615.5,172.5 616.8,173.7 618.0999999999999,172.5" fill="none" stroke="#888" stroke-width="0.5"/><text x="527.6" y="174.79999999999998" font-size="5" fill="#333" font-weight="normal" text-anchor="start" font-family="Liberation Sans" stroke="#333" stroke-width="0.12" textLength="13.0" lengthAdjust="spacingAndGlyphs">ByLayer</text>
<rect x="526.8" y="177.60000000000002" width="92.6" height="5.6000000000000005" fill="#fff" stroke="#d4d4d4" stroke-width="0.6"/><rect x="614.2" y="177.9" width="5.2" height="5.0" fill="#e4e4e4" stroke="#cdcdcd" stroke-width="0.4"/><polyline points="615.5,179.8 616.8,181.0 618.0999999999999,179.8" fill="none" stroke="#888" stroke-width="0.5"/><text x="527.6" y="182.1" font-size="5" fill="#333" font-weight="normal" text-anchor="start" font-family="Liberation Sans" stroke="#333" stroke-width="0.12" textLength="27.6" lengthAdjust="spacingAndGlyphs">monochrome.ctb</text>
<rect x="526.6" y="184.6" width="93" height="6.9" fill="#b5cdea"/><text x="527.6" y="190.1" font-size="5" fill="#2a3550" font-weight="normal" text-anchor="start" font-family="Liberation Sans" stroke="#2a3550" stroke-width="0.12" textLength="8.8" lengthAdjust="spacingAndGlyphs">None</text>
<path d="M517.4,165.8 h5.6 M520.2,163.4 v4.8" stroke="#7aa08a" stroke-width="0.6"/>
<rect x="517.4" y="170.3" width="1.4" height="5.6" fill="#c84040"/><polygon points="519.2,170.3 523.4,170.3 521.4,175" fill="#b0d060"/><rect x="518.8" y="173.6" width="2" height="2.4" fill="#4a7a8a"/>
<rect x="517.4" y="177.60000000000002" width="1.4" height="5.6" fill="#c84040"/><polygon points="519.2,177.60000000000002 523.4,177.60000000000002 521.4,182.3" fill="#b0d060"/><rect x="518.8" y="180.9" width="2" height="2.4" fill="#4a7a8a"/>
<rect x="517.4" y="185.2" width="1.4" height="6" fill="#c84040"/><rect x="519.2" y="185.6" width="3.8" height="5.6" fill="#7a8a90"/><rect x="519.8" y="186.0" width="1.6" height="2" fill="#d8e8c0"/>
<rect x="513.4" y="194.3" width="106.2" height="7.399999999999977" fill="#dfe2f8" stroke="#c6cae0" stroke-width="0.5"/><text x="515" y="200.0" font-size="5" fill="#1a1a1a" font-weight="bold" text-anchor="start" font-family="Liberation Sans" stroke="#1a1a1a" stroke-width="0.15" textLength="9.0" lengthAdjust="spacingAndGlyphs">View</text><polygon points="614.9,199.1 617.9,199.1 616.4,197.0" fill="#222"/>
<rect x="526.6" y="205.9" width="93" height="6.4" fill="#b5cdea"/><text x="527.6" y="210.9" font-size="5" fill="#2a3550" font-weight="normal" text-anchor="start" font-family="Liberation Sans" stroke="#2a3550" stroke-width="0.12" textLength="16.0" lengthAdjust="spacingAndGlyphs">7038.188</text>
<rect x="526.6" y="213.6" width="93" height="6.4" fill="#b5cdea"/><text x="527.6" y="218.6" font-size="5" fill="#2a3550" font-weight="normal" text-anchor="start" font-family="Liberation Sans" stroke="#2a3550" stroke-width="0.12" textLength="19.6" lengthAdjust="spacingAndGlyphs">-9 1934.013</text>
<rect x="526.6" y="221.3" width="93" height="6.4" fill="#b5cdea"/><text x="527.6" y="226.3" font-size="5" fill="#2a3550" font-weight="normal" text-anchor="start" font-family="Liberation Sans" stroke="#2a3550" stroke-width="0.12" textLength="2.6" lengthAdjust="spacingAndGlyphs">0</text>
<rect x="526.6" y="229.0" width="93" height="6.4" fill="#b5cdea"/><text x="527.6" y="234.0" font-size="5" fill="#2a3550" font-weight="normal" text-anchor="start" font-family="Liberation Sans" stroke="#2a3550" stroke-width="0.12" textLength="16.0" lengthAdjust="spacingAndGlyphs">14878.11</text>
<rect x="526.6" y="236.6" width="93" height="6.4" fill="#b5cdea"/><text x="527.6" y="241.6" font-size="5" fill="#2a3550" font-weight="normal" text-anchor="start" font-family="Liberation Sans" stroke="#2a3550" stroke-width="0.12" textLength="16.0" lengthAdjust="spacingAndGlyphs">7065.265</text>
<circle cx="520.2" cy="209.1" r="2.1" fill="none" stroke="#999" stroke-width="0.5"/><circle cx="520.6" cy="209.9" r="0.5" fill="#c06060"/>
<circle cx="520.2" cy="216.79999999999998" r="2.1" fill="none" stroke="#999" stroke-width="0.5"/><circle cx="520.6" cy="217.6" r="0.5" fill="#c06060"/>
<circle cx="520.2" cy="224.5" r="2.1" fill="none" stroke="#999" stroke-width="0.5"/><circle cx="520.6" cy="225.3" r="0.5" fill="#c06060"/>
<path d="M520.2,229.6 v5.4 M518.8,229.6 h2.8 M518.8,235.0 h2.8" stroke="#5aa0b0" stroke-width="0.6"/>
<path d="M517,239.79999999999998 h6.4 M517,238.4 v2.8 M523.4,238.4 v2.8" stroke="#5aa0b0" stroke-width="0.6"/>
<rect x="513.4" y="245.4" width="106.2" height="6.799999999999983" fill="#dfe2f8" stroke="#c6cae0" stroke-width="0.5"/><text x="515" y="250.5" font-size="5" fill="#1a1a1a" font-weight="bold" text-anchor="start" font-family="Liberation Sans" stroke="#1a1a1a" stroke-width="0.15" textLength="9.2" lengthAdjust="spacingAndGlyphs">Misc</text><polygon points="614.9,249.9 617.9,249.9 616.4,247.8" fill="#222"/>
<rect x="526.8" y="258.0" width="92.6" height="5.6000000000000005" fill="#fff" stroke="#d4d4d4" stroke-width="0.6"/><rect x="614.2" y="258.3" width="5.2" height="5.0" fill="#e4e4e4" stroke="#cdcdcd" stroke-width="0.4"/><polyline points="615.5,260.2 616.8,261.40000000000003 618.0999999999999,260.2" fill="none" stroke="#888" stroke-width="0.5"/><text x="527.6" y="262.5" font-size="5" fill="#333" font-weight="normal" text-anchor="start" font-family="Liberation Sans" stroke="#333" stroke-width="0.12" textLength="5.6" lengthAdjust="spacingAndGlyphs">1:1</text>
<rect x="526.8" y="265.5" width="92.6" height="5.6000000000000005" fill="#fff" stroke="#d4d4d4" stroke-width="0.6"/><rect x="614.2" y="265.8" width="5.2" height="5.0" fill="#e4e4e4" stroke="#cdcdcd" stroke-width="0.4"/><polyline points="615.5,267.7 616.8,268.90000000000003 618.0999999999999,267.7" fill="none" stroke="#888" stroke-width="0.5"/><text x="527.6" y="270.0" font-size="5" fill="#333" font-weight="normal" text-anchor="start" font-family="Liberation Sans" stroke="#333" stroke-width="0.12" textLength="6.2" lengthAdjust="spacingAndGlyphs">Yes</text>
<rect x="526.8" y="272.90000000000003" width="92.6" height="5.6000000000000005" fill="#fff" stroke="#d4d4d4" stroke-width="0.6"/><rect x="614.2" y="273.20000000000005" width="5.2" height="5.0" fill="#e4e4e4" stroke="#cdcdcd" stroke-width="0.4"/><polyline points="615.5,275.1 616.8,276.30000000000007 618.0999999999999,275.1" fill="none" stroke="#888" stroke-width="0.5"/><text x="527.6" y="277.40000000000003" font-size="5" fill="#333" font-weight="normal" text-anchor="start" font-family="Liberation Sans" stroke="#333" stroke-width="0.12" textLength="6.2" lengthAdjust="spacingAndGlyphs">Yes</text>
<rect x="526.8" y="280.1" width="92.6" height="5.6000000000000005" fill="#fff" stroke="#d4d4d4" stroke-width="0.6"/><rect x="614.2" y="280.40000000000003" width="5.2" height="5.0" fill="#e4e4e4" stroke="#cdcdcd" stroke-width="0.4"/><polyline points="615.5,282.3 616.8,283.50000000000006 618.0999999999999,282.3" fill="none" stroke="#888" stroke-width="0.5"/><text x="527.6" y="284.6" font-size="5" fill="#333" font-weight="normal" text-anchor="start" font-family="Liberation Sans" stroke="#333" stroke-width="0.12" textLength="6.2" lengthAdjust="spacingAndGlyphs">Yes</text>
<rect x="526.6" y="286.9" width="93" height="6.6" fill="#b5cdea"/>
<text x="517.8" y="263.09999999999997" font-size="6" fill="#222" font-weight="bold" text-anchor="start" font-family="Liberation Sans" stroke="#222" stroke-width="0.05" textLength="4.4" lengthAdjust="spacingAndGlyphs">A</text>
<rect x="516.8" y="265.4" width="6.6" height="5.8" fill="#d8e8f6" stroke="#9ac0e0" stroke-width="0.4"/>
<path d="M518,270.4 h5 M519.4,266.59999999999997 v3.8 M518,270.4 l-0.6,0.8" stroke="#444" stroke-width="0.6" fill="none"/>
<path d="M518,277.8 h5 M519.4,274.0 v3.8 M518,277.8 l-0.6,0.8" stroke="#444" stroke-width="0.6" fill="none"/>
<path d="M518,285.0 h5 M519.4,281.2 v3.8 M518,285.0 l-0.6,0.8" stroke="#444" stroke-width="0.6" fill="none"/>
<path d="M518,292.09999999999997 h5 M519.4,288.29999999999995 v3.8 M518,292.09999999999997 l-0.6,0.8" stroke="#444" stroke-width="0.6" fill="none"/>
<circle cx="523" cy="280.40000000000003" r="0.7" fill="#4ab04a"/>
<rect x="633.2" y="57" width="8.4" height="346.4" fill="#c3c3c3"/>
<path d="M636,59.2 l2.6,2.6 M638.6,59.2 l-2.6,2.6" stroke="#222" stroke-width="0.6"/>
<rect x="636.2" y="67.4" width="2.4" height="3.4" fill="#333"/><rect x="635.6" y="67" width="3.6" height="0.8" fill="#333"/><rect x="637.1" y="70.6" width="0.6" height="1.4" fill="#333"/>
<rect x="641.6" y="56" width="7.4" height="347.4" fill="#fcfcfc"/>
<line x1="641.8" y1="82.6" x2="649" y2="82.6" stroke="#ececec" stroke-width="0.4"/><line x1="641.8" y1="108.4" x2="649" y2="108.4" stroke="#ececec" stroke-width="0.4"/><line x1="641.8" y1="139.4" x2="649" y2="139.4" stroke="#ececec" stroke-width="0.4"/>
<g transform="translate(646.8,77.8) rotate(-90)"><text x="0" y="0" font-size="4.6" fill="#333" font-weight="normal" text-anchor="start" font-family="Liberation Sans" stroke="#333" stroke-width="0.04" textLength="18.4" lengthAdjust="spacingAndGlyphs">Properties</text></g>
<g transform="translate(646.8,105) rotate(-90)"><text x="0" y="0" font-size="4.6" fill="#333" font-weight="normal" text-anchor="start" font-family="Liberation Sans" stroke="#333" stroke-width="0.04" textLength="18.2" lengthAdjust="spacingAndGlyphs">HomeStyle</text></g>
<g transform="translate(646.8,136.4) rotate(-90)"><text x="0" y="0" font-size="4.6" fill="#333" font-weight="normal" text-anchor="start" font-family="Liberation Sans" stroke="#333" stroke-width="0.04" textLength="23.6" lengthAdjust="spacingAndGlyphs">Grade Generator</text></g>
<g transform="translate(639.4,394.8) rotate(-90)"><text x="0" y="0" font-size="4.8" fill="#111" font-weight="bold" text-anchor="start" font-family="Liberation Sans" stroke="#111" stroke-width="0.2" textLength="20.4" lengthAdjust="spacingAndGlyphs">Properties</text></g>
<rect x="634.6" y="398.2" width="1.6" height="1.8" fill="#e07050"/><rect x="636.2" y="398" width="1.6" height="2" fill="#e0c060"/><rect x="637.8" y="398.2" width="1.6" height="1.8" fill="#80c060"/><rect x="636.6" y="400.2" width="1.2" height="1.2" fill="#555"/>
<text x="2.8" y="416.2" font-size="5.6" fill="#333" font-weight="normal" text-anchor="start" font-family="Liberation Sans" stroke="#333" stroke-width="0.05" textLength="13.4" lengthAdjust="spacingAndGlyphs">LAYER</text>
<text x="2.8" y="421.8" font-size="5.6" fill="#333" font-weight="normal" text-anchor="start" font-family="Liberation Sans" stroke="#333" stroke-width="0.05" textLength="26.2" lengthAdjust="spacingAndGlyphs">Undo LAYER</text>
<text x="2.8" y="427.3" font-size="5.6" fill="#333" font-weight="normal" text-anchor="start" font-family="Liberation Sans" stroke="#333" stroke-width="0.05" textLength="20.6" lengthAdjust="spacingAndGlyphs">Command:</text>
<text x="2.8" y="432.9" font-size="5.6" fill="#333" font-weight="normal" text-anchor="start" font-family="Liberation Sans" stroke="#333" stroke-width="0.05" textLength="38.2" lengthAdjust="spacingAndGlyphs">Command: _OPEN</text>
<text x="2.4" y="439.7" font-size="5.6" fill="#333" font-weight="normal" text-anchor="start" font-family="Liberation Sans" stroke="#333" stroke-width="0.05" textLength="21.0" lengthAdjust="spacingAndGlyphs">Command:</text>
<rect x="1" y="405.6" width="648" height="7.6" fill="#c3c3c3"/><line x1="1" y1="405.6" x2="649" y2="405.6" stroke="#a8a8a8" stroke-width="0.6"/>
<text x="2.5" y="411.4" font-size="5" fill="#222" font-weight="bold" text-anchor="start" font-family="Liberation Sans" stroke="#222" stroke-width="0.05" textLength="35.2" lengthAdjust="spacingAndGlyphs">Command window</text>
<path d="M636.8,408 h2.6 v2.8 h-2.6z" fill="#333"/><rect x="637.4" y="407.4" width="2.4" height="0.6" fill="#333"/><path d="M643.6,408 l2.6,2.8 M646.2,408 l-2.6,2.8" stroke="#111" stroke-width="0.75"/>
<rect x="643.4" y="413.5" width="5.6" height="21" fill="#f4f4f4"/>
<polygon points="644.2,417.6 647.8,417.6 646,415.6" fill="#222"/><polygon points="644.2,431.8 647.8,431.8 646,433.8" fill="#222"/>
<rect x="644" y="426" width="4.4" height="3.6" fill="#d8d8d8"/>
<text x="2" y="449.8" font-size="4.8" fill="#333" font-weight="normal" text-anchor="start" font-family="Liberation Sans" stroke="#333" stroke-width="0.1" textLength="34.4" lengthAdjust="spacingAndGlyphs">DraftSight 2019 x64</text>
<rect x="231.8" y="443.6" width="8.0" height="8" fill="#f2f2f2" stroke="#e0e0e0" stroke-width="0.5"/>
<rect x="243.8" y="443.6" width="8.0" height="8" fill="#f2f2f2" stroke="#e0e0e0" stroke-width="0.5"/>
<rect x="255.5" y="443.6" width="8.0" height="8" fill="#f2f2f2" stroke="#e0e0e0" stroke-width="0.5"/>
<rect x="266.5" y="443.6" width="8.0" height="8" fill="#f2f2f2" stroke="#e0e0e0" stroke-width="0.5"/>
<rect x="278.2" y="443.6" width="8.0" height="8" fill="#f2f2f2" stroke="#e0e0e0" stroke-width="0.5"/>
<rect x="291.5" y="443.6" width="8.0" height="8" fill="#c4dcf4" stroke="#7aaee0" stroke-width="0.6"/>
<rect x="303" y="443.6" width="7.600000000000023" height="8" fill="#c4dcf4" stroke="#7aaee0" stroke-width="0.6"/>
<rect x="314" y="443.6" width="8" height="8" fill="#c4dcf4" stroke="#7aaee0" stroke-width="0.6"/>
<rect x="325.6" y="443.6" width="7.199999999999989" height="8" fill="#f2f2f2" stroke="#e0e0e0" stroke-width="0.5"/>
<circle cx="235.2" cy="446.8" r="1.8" fill="#333"/><circle cx="236.6" cy="448.6" r="1.6" fill="#e0b020"/>
<path d="M246,445.4 l3.6,3.6" stroke="#c03030" stroke-width="0.7"/><circle cx="246" cy="445.4" r="0.6" fill="#333"/><circle cx="249.6" cy="449" r="0.6" fill="#333"/>
<rect x="257.2" y="445" width="1.8" height="2" fill="#444"/><rect x="259.6" y="445" width="1.8" height="2" fill="#444"/><rect x="257.2" y="447.6" width="1.8" height="2" fill="#444"/><rect x="259.6" y="447.6" width="1.8" height="2" fill="#444"/>
<path d="M268.6,445.2 h3.4 v4.4 h-3.4 M268.6,447.4 h-1.2 M270.4,445.2 v4.4" fill="none" stroke="#555" stroke-width="0.55"/>
<circle cx="282.2" cy="447.6" r="1.9" fill="none" stroke="#5a6a80" stroke-width="0.6"/>
<path d="M293.6,445.2 l3.6,3.6 M293.6,445.2 v3" stroke="#555" stroke-width="0.5"/><circle cx="297.4" cy="449.2" r="0.7" fill="#c03030"/>
<path d="M305,449.6 h3.6 M306.8,445 v4.6" stroke="#555" stroke-width="0.6"/>
<path d="M316,445.6 h4 v4 h-4 z" fill="none" stroke="#7a8a9a" stroke-width="0.4" stroke-dasharray="0.6 0.4"/>
<rect x="327.4" y="446" width="3.6" height="4" fill="none" stroke="#555" stroke-width="0.6"/><path d="M327.4,445 h3.6" stroke="#7aaee0" stroke-width="0.5"/>
<rect x="336.2" y="443.6" width="29" height="8" fill="#f4f4f4" stroke="#dcdcdc" stroke-width="0.5"/>
<text x="338.2" y="449.4" font-size="4.6" fill="#333" font-weight="normal" text-anchor="start" font-family="Liberation Sans" stroke="#333" stroke-width="0.08" textLength="25.2" lengthAdjust="spacingAndGlyphs">Dynamic CCS</text>
<rect x="368.3" y="443.6" width="33.2" height="8" fill="#f4f4f4" stroke="#dcdcdc" stroke-width="0.5"/>
<text x="371" y="449.4" font-size="4.4" fill="#333" font-weight="normal" text-anchor="start" font-family="Liberation Sans" stroke="#333" stroke-width="0.08" textLength="19.4" lengthAdjust="spacingAndGlyphs">Annotation</text>
<polygon points="395.2,446.2 399,446.2 397.1,448.8" fill="#111"/>
<rect x="403.4" y="443.6" width="9.2" height="8" fill="#f4f4f4" stroke="#dcdcdc" stroke-width="0.5"/>
<text x="404.2" y="449.4" font-size="4.4" fill="#333" font-weight="normal" text-anchor="start" font-family="Liberation Sans" stroke="#333" stroke-width="0.08" textLength="7.6" lengthAdjust="spacingAndGlyphs">(1:1)</text>
<text x="414.4" y="449.4" font-size="4.4" fill="#333" font-weight="normal" text-anchor="start" font-family="Liberation Sans" stroke="#333" stroke-width="0.08" textLength="41.6" lengthAdjust="spacingAndGlyphs">(-208.213,-99827.126,0)</text>
</svg>
<div class="a" style="left:0px;top:0px;width:650px;height:454px;border:1px solid #98a1b1"></div>
</body></html>
